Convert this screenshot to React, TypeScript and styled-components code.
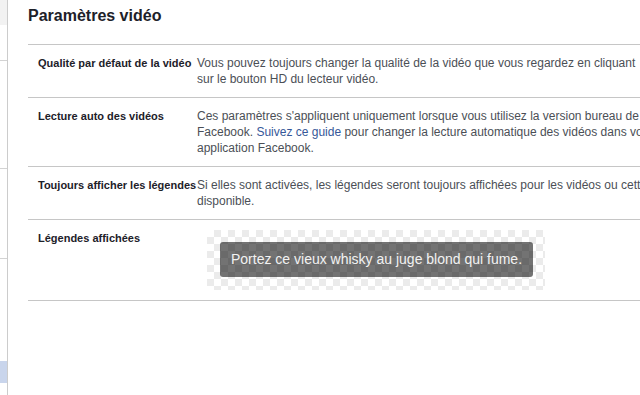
import React from 'react';
import styled, { createGlobalStyle } from 'styled-components';

const GlobalStyle = createGlobalStyle`
  html, body, #root {
    height: 100%;
  }
  body {
    margin: 0;
    overflow: hidden;
    background: #ffffff;
    font-family: "Liberation Sans", Arial, sans-serif;
  }
`;

const Page = styled.div`
  display: flex;
  height: 100%;
`;

const Sidebar = styled.aside`
  width: 7px;
  flex-shrink: 0;
  display: flex;
  flex-direction: column;
  border-right: 1px solid #cccccc;
`;

const SideBlock = styled.div<{ h: number; tone?: 'gray' | 'blue'; divider?: boolean }>`
  height: ${({ h }) => h}px;
  flex-shrink: 0;
  background: ${({ tone }) =>
    tone === 'gray' ? '#f2f2f2' : tone === 'blue' ? '#c9d5ec' : 'transparent'};
  border-bottom: ${({ divider }) => (divider ? '1px solid #d3d3d3' : 'none')};
`;

const Main = styled.main`
  flex: 1;
  min-width: 760px;
  padding-left: 20px;
`;

const Title = styled.h2`
  margin: 6px 0 18px;
  font-size: 16px;
  line-height: 20px;
  font-weight: bold;
  color: #1d2129;
`;

const Table = styled.div`
  border-top: 1px solid #c6c6c6;
`;

const Row = styled.div`
  display: flex;
  padding: 10px 0;
  border-bottom: 1px solid #c6c6c6;
`;

const Label = styled.div`
  width: 159px;
  flex-shrink: 0;
  padding-left: 10px;
  font-size: 11px;
  line-height: 16px;
  font-weight: bold;
  color: #1d2129;
  white-space: nowrap;
`;

const Description = styled.div`
  font-size: 12px;
  line-height: 16px;
  color: #4b4f56;
`;

const Line = styled.span`
  display: block;
  white-space: nowrap;
`;

const Link = styled.a`
  color: #365899;
  text-decoration: none;
  cursor: pointer;
`;

const Checker = styled.div`
  margin-left: 10px;
  width: 338px;
  height: 60px;
  box-sizing: border-box;
  padding: 12px 12px 13px 13px;
  background-color: #ffffff;
  background-image: conic-gradient(
    #ebebeb 0 25%,
    transparent 0 50%,
    #ebebeb 0 75%,
    transparent 0
  );
  background-size: 14px 14px;
`;

const Caption = styled.div`
  height: 35px;
  padding: 0 11px;
  border-radius: 3px;
  background: rgba(0, 0, 0, 0.55);
  color: #f2f2f2;
  font-size: 14px;
  line-height: 35px;
  white-space: nowrap;
`;

const sideBlocks = [
  { h: 25, tone: 'gray' as const },
  { h: 35, divider: true },
  { h: 107, divider: true },
  { h: 89, divider: true },
  { h: 102 },
  { h: 22, tone: 'blue' as const },
];

const App: React.FC = () => {
  return (
    <>
      <GlobalStyle />
      <Page>
        <Sidebar>
          {sideBlocks.map((b, i) => (
            <SideBlock key={i} h={b.h} tone={b.tone} divider={b.divider} />
          ))}
        </Sidebar>

        <Main>
          <Title>Paramètres vidéo</Title>
          <Table>
            <Row>
              <Label>Qualité par défaut de la vidéo</Label>
              <Description>
                <Line>Vous pouvez toujours changer la qualité de la vidéo que vous regardez en cliquant</Line>
                <Line>sur le bouton HD du lecteur vidéo.</Line>
              </Description>
            </Row>
            <Row>
              <Label>Lecture auto des vidéos</Label>
              <Description>
                <Line>Ces paramètres s'appliquent uniquement lorsque vous utilisez la version bureau de</Line>
                <Line>
                  Facebook. <Link>Suivez ce guide</Link> pour changer la lecture automatique des vidéos dans votre
                </Line>
                <Line>application Facebook.</Line>
              </Description>
            </Row>
            <Row>
              <Label>Toujours afficher les légendes</Label>
              <Description>
                <Line>Si elles sont activées, les légendes seront toujours affichées pour les vidéos ou cette option est</Line>
                <Line>disponible.</Line>
              </Description>
            </Row>
            <Row>
              <Label>Légendes affichées</Label>
              <Checker>
                <Caption>Portez ce vieux whisky au juge blond qui fume.</Caption>
              </Checker>
            </Row>
          </Table>
        </Main>
      </Page>
    </>
  );
};

export default App;
